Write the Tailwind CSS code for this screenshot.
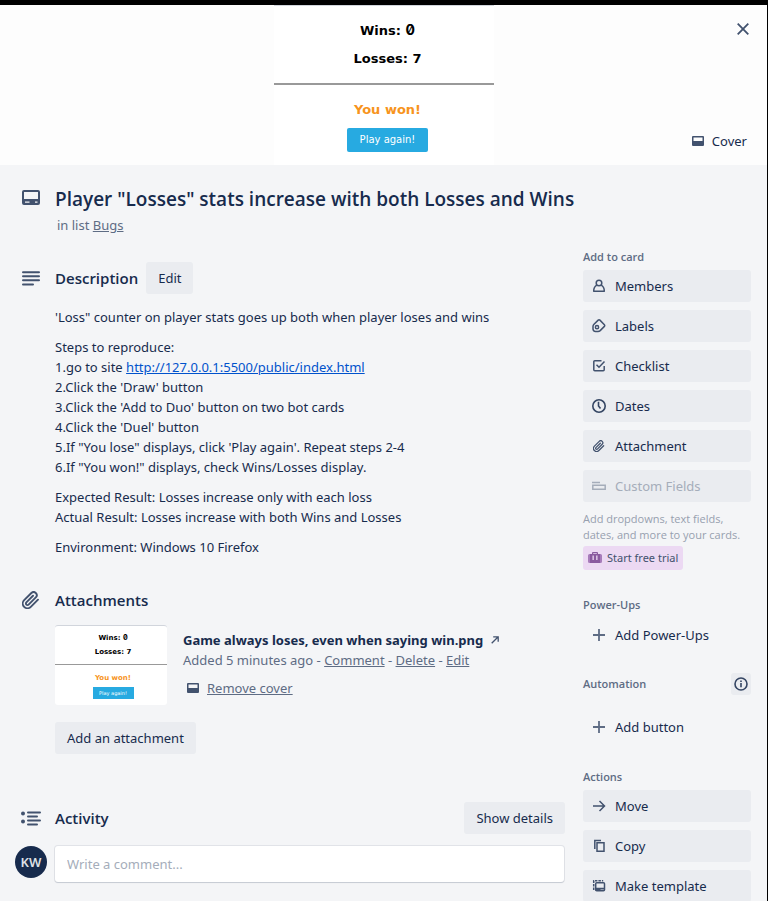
<!DOCTYPE html>
<html lang="en">
<head>
<meta charset="utf-8">
<meta name="viewport" content="width=device-width, initial-scale=1">
<title>Player "Losses" stats increase with both Losses and Wins</title>
<script src="https://cdn.jsdelivr.net/npm/@tailwindcss/browser@4"></script>
</head>
<body class="bg-black pt-[5px] pr-px font-['Noto_Sans','Open_Sans',sans-serif] text-[13px] leading-5 text-[#172b4d]">

<svg class="hidden" aria-hidden="true">
  <symbol id="clip" viewBox="1 0 23 23"><path d="M21.440 11.050l-9.190 9.190a6 6 0 0 1-8.490-8.490l9.190-9.190a4 4 0 0 1 5.660 5.660l-9.200 9.190a2 2 0 0 1-2.830-2.830l8.490-8.480" fill="none" stroke="currentColor" stroke-width="2.400" stroke-linecap="round" stroke-linejoin="round"/></symbol>
  <symbol id="cover" viewBox="0 0 12 10"><path fill-rule="evenodd" fill="currentColor" d="M1 0h10a1 1 0 0 1 1 1v8a1 1 0 0 1-1 1H1a1 1 0 0 1-1-1V1a1 1 0 0 1 1-1Zm.500 1.500V5h9V1.500Z"/></symbol>
  <symbol id="plus" viewBox="0 0 14 14"><path d="M7 1v12M1 7h12" fill="none" stroke="currentColor" stroke-width="1.800"/></symbol>
</svg>

<div class="min-h-[calc(100vh-5px)] bg-[#f4f5f7]">
  <header class="relative flex h-40 justify-center bg-[#fdfdfd]">
    <div class="flex w-[220px] flex-col items-center border-t border-gray-300 bg-white font-['DejaVu_Sans',sans-serif] font-bold text-black">
      <div class="flex w-full flex-col items-center gap-2 border-b-2 border-[#999] pt-[14px] pb-[14px] pl-2 text-[13px]">
        <p>Wins: <span class="font-[Inter] text-[14px] font-bold slashed-zero">0</span></p>
        <p>Losses: 7</p>
      </div>
      <div class="flex flex-col items-center gap-2 pt-[15px] pl-2">
        <p class="text-[13px] font-bold text-[#f7941d]">You won!</p>
        <button class="h-6 w-[81px] rounded-xs bg-[#27aae1] text-[10px] font-normal text-white">Play again!</button>
      </div>
    </div>
    <button aria-label="Close" class="absolute top-1 right-1 flex size-10 items-center justify-center text-[#42526e]">
      <svg class="size-3" viewBox="0 0 12 12"><path d="M.700.700l10.600 10.600M11.300.700.700 11.300" stroke="currentColor" stroke-width="1.800"/></svg>
    </button>
    <button class="absolute right-2 bottom-2 flex h-8 items-center gap-2 px-3">
      <svg class="h-[10px] w-3 text-[#42526e]"><use href="#cover"/></svg>Cover
    </button>
  </header>

  <main class="px-4 pt-[22px]">
    <div class="flex">
      <svg class="mt-[3px] mr-[15px] ml-1.5 h-[15px] w-[18px] shrink-0 text-[#42526e]" viewBox="0 0 18 15"><path fill-rule="evenodd" fill="currentColor" d="M2 0h14a2 2 0 0 1 2 2v11a2 2 0 0 1-2 2H2a2 2 0 0 1-2-2V2a2 2 0 0 1 2-2Zm0 2v7h14V2ZM3 11.500v1.200h4.500v-1.200Zm10 0v1.200h2.500v-1.200Z"/></svg>
      <div>
        <h1 class="font-['Open_Sans',sans-serif] text-[19px] leading-6 font-semibold">Player "Losses" stats increase with both Losses and Wins</h1>
        <p class="mt-1 pl-0.5 text-[#5e6c84]">in list <a href="#" class="underline">Bugs</a></p>
      </div>
    </div>

    <div class="mt-3 flex gap-[18px]">
      <div class="min-w-0 flex-1 pt-[15px]">
        <section>
          <div class="flex items-center">
            <svg class="mr-[15px] ml-1.5 h-[15px] w-[18px] shrink-0 text-[#42526e]" viewBox="0 0 18 15"><path d="M1 1.200h16M1 5.200h16M1 9.200h16M1 13.600h10" stroke="currentColor" stroke-width="2" stroke-linecap="round"/></svg>
            <h2 class="font-['Open_Sans',sans-serif] text-[15px] font-semibold">Description</h2>
            <button class="ml-2 h-8 rounded-[3px] bg-[#eaecf0] px-3">Edit</button>
          </div>
          <div class="flex flex-col gap-2.5 pt-[13px] pl-[39px]">
            <p>'Loss" counter on player stats goes up both when player loses and wins</p>
            <p>Steps to reproduce:<br>1.go to site <a href="#" class="text-[#0052cc] underline">http://127.0.0.1:5500/public/index.html</a><br>2.Click the 'Draw' button<br>3.Click the 'Add to Duo' button on two bot cards<br>4.Click the 'Duel' button<br>5.If "You lose" displays, click 'Play again'. Repeat steps 2-4<br>6.If "You won!" displays, check Wins/Losses display.</p>
            <p>Expected Result: Losses increase only with each loss<br>Actual Result: Losses increase with both Wins and Losses</p>
            <p>Environment: Windows 10 Firefox</p>
          </div>
        </section>

        <section class="mt-[27px]">
          <div class="flex h-8 items-center">
            <svg class="mr-[15px] ml-1.5 size-[18px] shrink-0 text-[#42526e]"><use href="#clip"/></svg>
            <h2 class="font-['Open_Sans',sans-serif] text-[15px] font-semibold">Attachments</h2>
          </div>
          <div class="pl-[39px]">
            <div class="mt-[9px] flex gap-4">
              <div class="flex h-20 w-28 shrink-0 flex-col items-center rounded-[3px] border-t border-gray-300 bg-white font-['DejaVu_Sans',sans-serif] font-bold text-black">
                <div class="flex w-full flex-col items-center gap-1 border-b border-[#999] pt-[7px] pb-[7px] pl-1 text-[7px] leading-[10px]">
                  <p>Wins: <span class="font-[Inter] font-bold slashed-zero">0</span></p>
                  <p>Losses: 7</p>
                </div>
                <div class="flex flex-col items-center gap-1 pt-2 pl-1">
                  <p class="text-[7px] leading-[10px] text-[#f7941d]">You won!</p>
                  <button class="h-3 w-[41px] bg-[#27aae1] text-[5px] leading-3 font-normal text-white">Play again!</button>
                </div>
              </div>
              <div class="pt-[5px] text-[#5e6c84]">
                <p class="flex items-center gap-2 font-bold text-[#172b4d]">Game always loses, even when saying win.png
                  <svg class="size-2" viewBox="0 0 8 8"><path d="M.700 7.300 7 1M2.200.800H7.200V5.800" fill="none" stroke="#42526e" stroke-width="1.300"/></svg></p>
                <p>Added 5 minutes ago - <a href="#" class="underline">Comment</a> - <a href="#" class="underline">Delete</a> - <a href="#" class="underline">Edit</a></p>
                <a href="#" class="mt-2 flex items-center gap-2 pl-1 underline"><svg class="h-[10px] w-3 text-[#42526e]"><use href="#cover"/></svg>Remove cover</a>
              </div>
            </div>
            <button class="mt-[17px] h-8 rounded-[3px] bg-[#eaecf0] px-3">Add an attachment</button>
          </div>
        </section>

        <section class="mt-12">
          <div class="flex items-center">
            <svg class="mr-[14px] ml-[5px] h-[15px] w-5 shrink-0 text-[#42526e]" viewBox="0 0 20 15"><path d="M7 1.500h12M7 5.500h9M7 9.500h12M7 13.500h9" stroke="currentColor" stroke-width="2" stroke-linecap="round"/><circle cx="2" cy="2.500" r="2" fill="currentColor"/><circle cx="2" cy="10.500" r="2" fill="currentColor"/></svg>
            <h2 class="flex-1 font-['Open_Sans',sans-serif] text-[15px] font-semibold">Activity</h2>
            <button class="h-8 rounded-[3px] bg-[#eaecf0] px-3">Show details</button>
          </div>
          <div class="mt-3 flex gap-2 pr-px">
            <span class="-ml-px flex size-8 shrink-0 items-center justify-center rounded-full bg-[#172b4d] text-[13px] font-semibold text-[#dfe1e6]">KW</span>
            <input aria-label="Write a comment" placeholder="Write a comment..." class="h-9 min-w-0 flex-1 rounded-[3px] bg-white px-3 shadow-[0_1px_1px_#091e4220,0_0_0_1px_#091e4214] placeholder:text-[#a5adba]">
          </div>
        </section>
      </div>

      <aside class="w-[168px] shrink-0">
        <h3 class="font-['Open_Sans',sans-serif] text-[11px] font-semibold text-[#5e6c84]">Add to card</h3>
        <div class="mt-[3px] flex flex-col gap-2">
          <button class="flex h-8 items-center gap-2 rounded-[3px] bg-[#eaecf0] px-2"><svg class="size-4 text-[#42526e]" viewBox="0 0 16 16" fill="none" stroke="currentColor" stroke-width="1.500"><circle cx="8" cy="5" r="2.800"/><path d="M5.700 7.200C3.500 8.500 2.700 10.300 2.700 13.200h10.600c0-2.900-.800-4.700-3-6" stroke-linejoin="round"/></svg>Members</button>
          <button class="flex h-8 items-center gap-2 rounded-[3px] bg-[#eaecf0] px-2"><svg class="size-4 text-[#42526e]" viewBox="0 0 16 16" fill="none" stroke="currentColor" stroke-width="1.500"><path d="M3 6.300 7.200 2.100a1.200 1.200 0 0 1 1.700 0l4.500 4.600a1.200 1.200 0 0 1 0 1.700L9.200 12.600A3.500 3.500 0 0 1 6.700 13.400H4.500A2.500 2.500 0 0 1 2 11V8.500C2 7.700 2.400 6.900 3 6.300Z"/><circle cx="6" cy="9.200" r="1.600"/></svg>Labels</button>
          <button class="flex h-8 items-center gap-2 rounded-[3px] bg-[#eaecf0] px-2"><svg class="size-4 text-[#42526e]" viewBox="0 0 16 16" fill="none" stroke="currentColor" stroke-width="1.500"><path d="M10.500 2.700H3.800a1 1 0 0 0-1 1v8.100a1 1 0 0 0 1 1h8.400a1 1 0 0 0 1-1V8M5.500 6.800 8 9.300l5.500-5.800"/></svg>Checklist</button>
          <button class="flex h-8 items-center gap-2 rounded-[3px] bg-[#eaecf0] px-2"><svg class="size-4 text-[#344563]" viewBox="0 0 16 16" fill="none" stroke="currentColor" stroke-width="1.600"><circle cx="8" cy="8" r="6.200"/><path d="M7.500 3.800V8l2 2.400"/></svg>Dates</button>
          <button class="flex h-8 items-center gap-2 rounded-[3px] bg-[#eaecf0] px-2"><svg class="mx-[2px] size-3 text-[#42526e]"><use href="#clip"/></svg>Attachment</button>
          <button disabled class="flex h-8 items-center gap-2 rounded-[3px] bg-[#eaecf0] px-2 text-[#a5adba]"><svg class="size-4" viewBox="0 0 16 16" fill="none" stroke="currentColor" stroke-width="1.500"><path d="M1 4.500h8M1.800 7.200h12.400v4H1.800Z"/></svg>Custom Fields</button>
        </div>
        <p class="mt-[9px] font-['Open_Sans',sans-serif] text-[11px] leading-4 text-[#97a0af]">Add dropdowns, text fields, dates, and more to your cards.</p>
        <button class="mt-[3px] flex h-6 items-center gap-[5px] rounded-[3px] bg-[#ecd9f3] px-[5px] text-[11px] text-[#42526e]"><svg class="h-3 w-[14px]" viewBox="0 0 14 12"><path d="M2 2v9H1.500A1.500 1.500 0 0 1 0 9.500v-6A1.500 1.500 0 0 1 1.500 2ZM12 2v9h.500A1.500 1.500 0 0 0 14 9.500v-6A1.500 1.500 0 0 0 12.500 2Z" fill="#a77cba"/><path fill-rule="evenodd" d="M2 2h2V1a1 1 0 0 1 1-1h4a1 1 0 0 1 1 1v1h2v9H2ZM5.200 1.200V2h3.600v-.800ZM4.500 3.500V8h1.300V3.500ZM8.200 3.500V8h1.300V3.500Z" fill="#8a5a9f"/></svg>Start free trial</button>

        <h3 class="mt-[25px] font-['Open_Sans',sans-serif] text-[11px] font-semibold text-[#5e6c84]">Power-Ups</h3>
        <button class="mt-1 flex h-8 items-center gap-[9px] px-[9px]"><svg class="size-[14px] text-[#5e6c84]"><use href="#plus"/></svg>Add Power-Ups</button>

        <div class="mt-[22px] flex items-center justify-between">
          <h3 class="font-['Open_Sans',sans-serif] text-[11px] font-semibold text-[#5e6c84]">Automation</h3>
          <button aria-label="About automation" class="flex h-[22px] w-5 items-center justify-center rounded-[3px] bg-[#eaecf0]"><svg class="size-[14px]" viewBox="0 0 14 14"><circle cx="7" cy="7" r="6" fill="none" stroke="#344563" stroke-width="1.600"/><path d="M7 6v4.200M7 3.500v1.500" stroke="#344563" stroke-width="1.600"/></svg></button>
        </div>
        <button class="mt-4 flex h-8 items-center gap-[9px] px-[9px]"><svg class="size-[14px] text-[#5e6c84]"><use href="#plus"/></svg>Add button</button>

        <h3 class="mt-6 font-['Open_Sans',sans-serif] text-[11px] font-semibold text-[#5e6c84]">Actions</h3>
        <div class="mt-[3px] flex flex-col gap-2">
          <button class="flex h-8 items-center gap-2 rounded-[3px] bg-[#eaecf0] px-2"><svg class="size-4 text-[#42526e]" viewBox="0 0 16 16" fill="none" stroke="currentColor" stroke-width="1.500"><path d="M2 8h11.500M8.500 3l5 5-5 5"/></svg>Move</button>
          <button class="flex h-8 items-center gap-2 rounded-[3px] bg-[#eaecf0] px-2"><svg class="size-4 text-[#42526e]" viewBox="0 0 16 16" fill="none" stroke="currentColor" stroke-width="1.500"><path d="M6 4.700h7v8.600H6ZM3.800 11V2.500h6.200"/></svg>Copy</button>
          <button class="flex h-8 items-center gap-2 rounded-[3px] bg-[#eaecf0] px-2"><svg class="size-4 text-[#42526e]" viewBox="0 0 16 16" fill="none" stroke="currentColor" stroke-width="1.500"><path d="M2.700 12V2.700h9.500" stroke-dasharray="2.500 1"/><rect x="4.700" y="4.700" width="8.800" height="8" rx="1"/><path d="M4.500 10.700h9M4.500 12h5" stroke-width="1.800"/></svg>Make template</button>
        </div>
      </aside>
    </div>
  </main>
</div>
</body>
</html>
